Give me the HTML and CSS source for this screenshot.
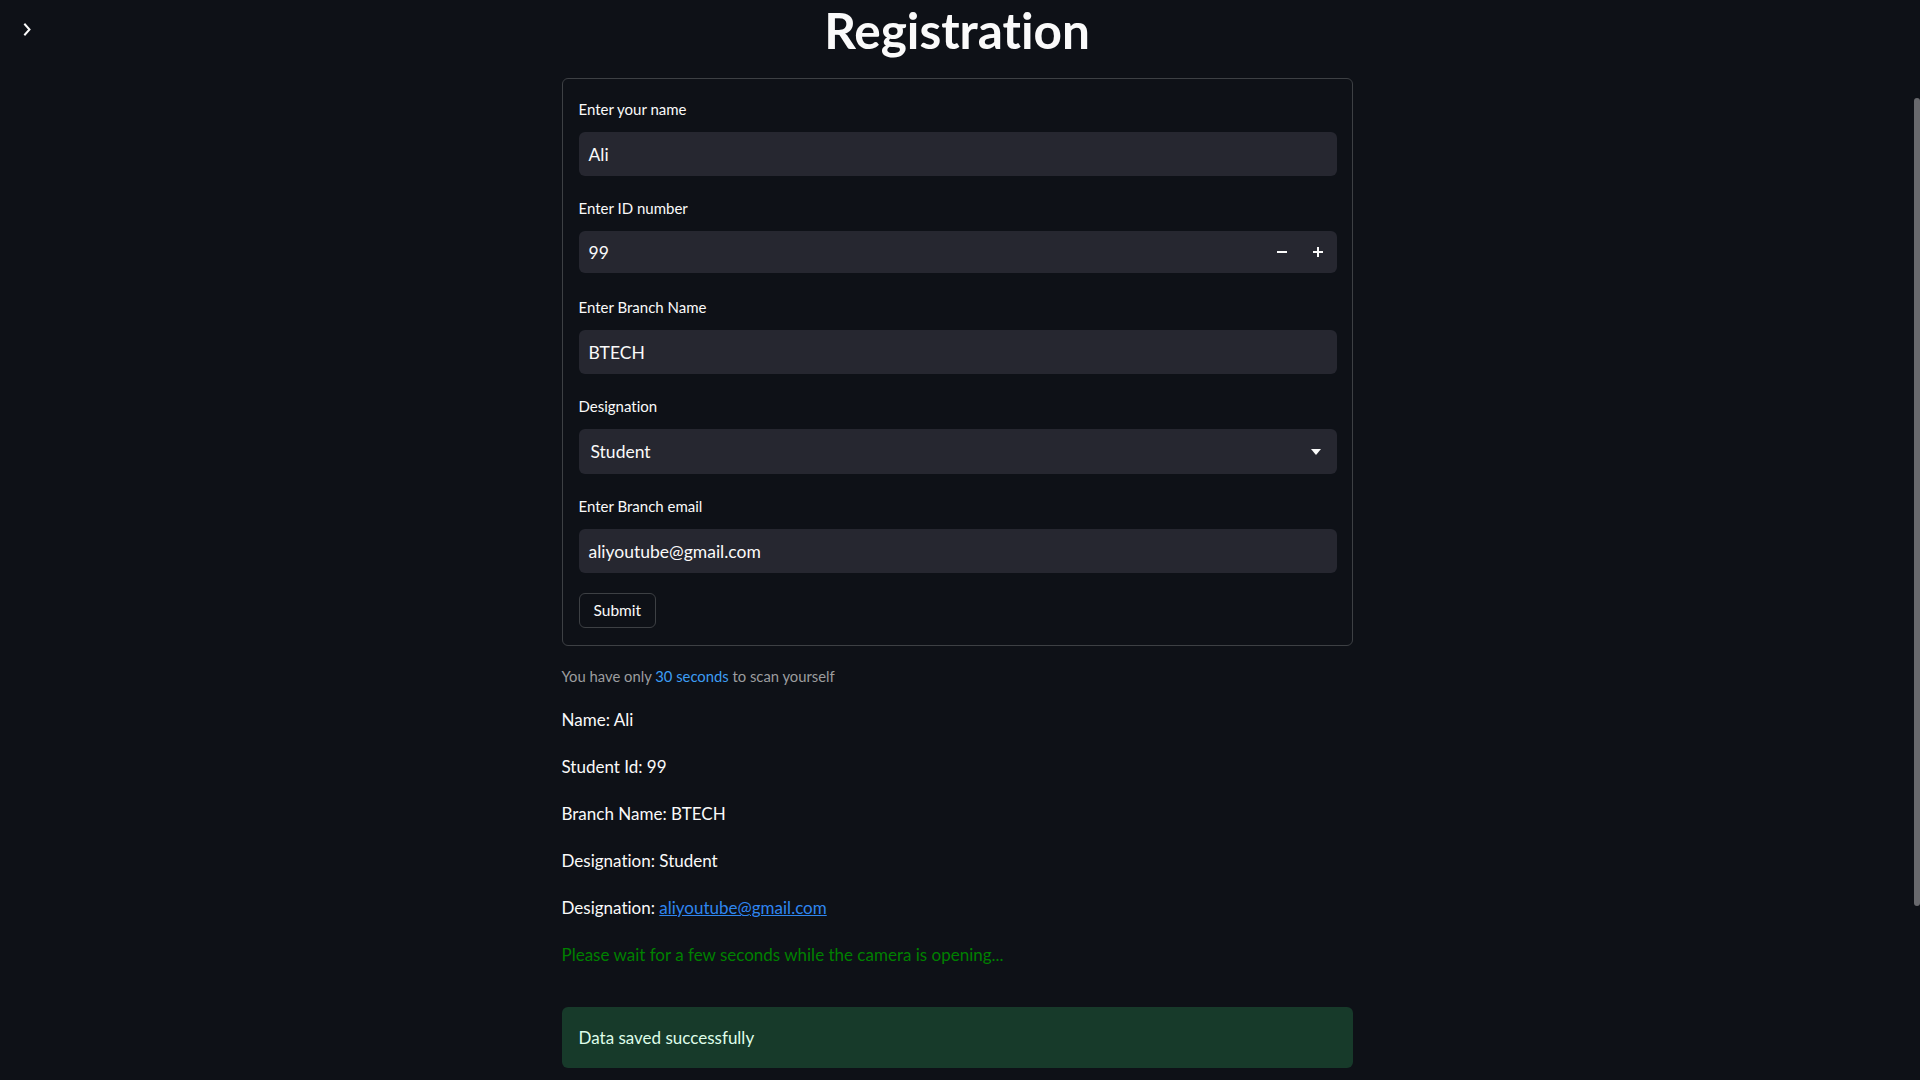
FILE: index.html
```html
<!DOCTYPE html>
<html lang="en">
<head>
<meta charset="utf-8">
<title>Registration</title>
<link rel="stylesheet" href="styles.css">
</head>
<body>
<button class="sidebar-toggle" aria-label="Open sidebar">
  <svg width="9" height="13" viewBox="0 0 9 13"><path d="M2 1.5 L6.5 6.5 L2 11.5" fill="none" stroke="#fafafa" stroke-width="2" stroke-linecap="square"/></svg>
</button>
<div class="app">
  <main class="main">
    <h1 class="title">Registration</h1>
    <form class="form">
      <div class="field">
        <label class="label">Enter your name</label>
        <div class="input">Ali</div>
      </div>
      <div class="field">
        <label class="label">Enter ID number</label>
        <div class="input input-number">
          <span class="value">99</span>
          <span class="step">
            <svg width="10" height="10" viewBox="0 0 10 10"><rect x="0" y="4" width="10" height="2" fill="#fafafa"/></svg>
          </span>
          <span class="step">
            <svg width="10" height="10" viewBox="0 0 10 10"><rect x="0" y="4" width="10" height="2" fill="#fafafa"/><rect x="4" y="0" width="2" height="10" fill="#fafafa"/></svg>
          </span>
        </div>
      </div>
      <div class="field">
        <label class="label">Enter Branch Name</label>
        <div class="input">BTECH</div>
      </div>
      <div class="field">
        <label class="label">Designation</label>
        <div class="input input-select">
          <span class="value">Student</span>
          <svg class="caret" width="10" height="6" viewBox="0 0 10 6"><path d="M0 0 H10 L5 6 Z" fill="#fafafa"/></svg>
        </div>
      </div>
      <div class="field">
        <label class="label">Enter Branch email</label>
        <div class="input">aliyoutube@gmail.com</div>
      </div>
      <button type="button" class="submit">Submit</button>
    </form>
    <p class="caption">You have only <span class="blue">30 seconds</span> to scan yourself</p>
    <p class="line first">Name: Ali</p>
    <p class="line">Student Id: 99</p>
    <p class="line">Branch Name: BTECH</p>
    <p class="line">Designation: Student</p>
    <p class="line">Designation: <a class="link" href="#">aliyoutube@gmail.com</a></p>
    <p class="line green">Please wait for a few seconds while the camera is opening...</p>
    <div class="success">Data saved successfully</div>
  </main>
</div>
<div class="scroll-thumb"></div>
</body>
</html>
```
FILE: styles.css
```css
html, body {
  margin: 0;
  padding: 0;
  height: 1080px;
  overflow: hidden;
  background: #0e1117;
}
body {
  font-family: Lato, "Open Sans", sans-serif;
  color: #fafafa;
  font-variant-ligatures: none;
}
.app {
  padding-right: 6px;
}
.main {
  width: 791px;
  margin: 0 auto;
  display: flex;
  flex-direction: column;
}
.title {
  margin: 0 0 19px 0;
  padding-top: 1px;
  font-size: 49.5px;
  font-weight: 700;
  line-height: 58px;
  text-align: center;
  color: #fafafa;
}
.form {
  border: 1px solid #3d4044;
  border-radius: 6px;
  padding: 18px 15px 17px 16px;
  display: flex;
  flex-direction: column;
  gap: 20px;
  margin: 0;
}
.field {
  display: flex;
  flex-direction: column;
}
.label {
  font-size: 15px;
  line-height: 24px;
  margin-bottom: 11px;
  color: #fafafa;
}
.input {
  height: 44px;
  box-sizing: border-box;
  background: #262730;
  border-radius: 6px;
  padding: 0 10px;
  display: flex;
  align-items: center;
  font-size: 17.5px;
  color: #fafafa;
}
.input-number {
  height: 42px;
  margin-bottom: 2px;
  padding-right: 1px;
}
.input-number .value {
  flex: 1;
}
.step {
  width: 36px;
  height: 42px;
  display: flex;
  align-items: center;
  justify-content: center;
}
.input-select {
  height: 45px;
  padding: 0 16px 0 12px;
}
.input-select .value {
  flex: 1;
}
.caret {
  display: block;
}
.submit {
  align-self: flex-start;
  height: 35px;
  padding: 0 14px;
  background: #0e1117;
  border: 1px solid #3d4044;
  border-radius: 6px;
  font-family: Lato, "Open Sans", sans-serif;
  font-size: 15.5px;
  line-height: 33px;
  color: #fafafa;
}
.caption {
  margin: 18px 0 0 0;
  font-size: 14.8px;
  line-height: 24px;
  color: #9c9d9f;
}
.blue {
  color: #3d9df3;
}
.line {
  margin: 18px 0 0 0;
  font-size: 17px;
  line-height: 29px;
  color: #fafafa;
}
.line.first {
  margin-top: 17px;
}
.link {
  color: #2f86f0;
  text-decoration: underline;
}
.green {
  color: #008000;
}
.success {
  margin-top: 38px;
  padding: 16px 17px;
  font-size: 17px;
  line-height: 29px;
  background: #173a2a;
  color: #dffde9;
  border-radius: 6px;
}
.sidebar-toggle {
  position: fixed;
  top: 23px;
  left: 23px;
  padding: 0;
  margin: 0;
  border: 0;
  background: transparent;
  display: flex;
}
.scroll-thumb {
  position: fixed;
  right: 0;
  top: 98px;
  width: 6px;
  height: 808px;
  border-radius: 3px;
  background: #68696d;
}
```
